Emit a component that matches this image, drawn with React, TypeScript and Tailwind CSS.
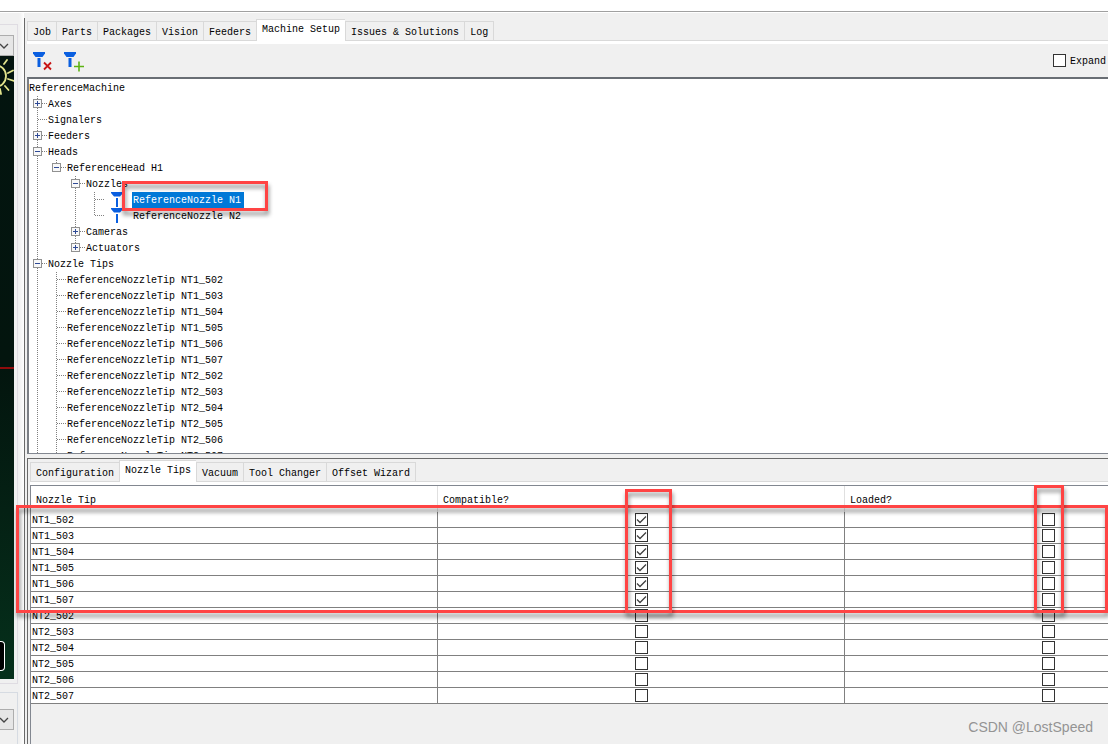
import { useState } from "react";
import clsx from "clsx";

type Cell = "blank" | "line" | "tee" | "end";

interface TreeRow {
  label: string;
  gutter: Cell[];
  toggle?: "plus" | "minus";
  nozzle?: boolean;
}

const tipNames = ["NT1_502", "NT1_503", "NT1_504", "NT1_505", "NT1_506", "NT1_507", "NT2_502", "NT2_503", "NT2_504", "NT2_505", "NT2_506", "NT2_507"];

const treeRows: TreeRow[] = [
  { label: "ReferenceMachine", gutter: [] },
  { label: "Axes", gutter: ["tee"], toggle: "plus" },
  { label: "Signalers", gutter: ["tee"] },
  { label: "Feeders", gutter: ["tee"], toggle: "plus" },
  { label: "Heads", gutter: ["tee"], toggle: "minus" },
  { label: "ReferenceHead H1", gutter: ["line", "end"], toggle: "minus" },
  { label: "Nozzles", gutter: ["line", "blank", "tee"], toggle: "minus" },
  { label: "ReferenceNozzle N1", gutter: ["line", "blank", "line", "tee"], nozzle: true },
  { label: "ReferenceNozzle N2", gutter: ["line", "blank", "line", "end"], nozzle: true },
  { label: "Cameras", gutter: ["line", "blank", "tee"], toggle: "plus" },
  { label: "Actuators", gutter: ["line", "blank", "end"], toggle: "plus" },
  { label: "Nozzle Tips", gutter: ["tee"], toggle: "minus" },
  ...tipNames.map((name): TreeRow => ({ label: `ReferenceNozzleTip ${name}`, gutter: ["line", "tee"] })),
];

const mainTabs = ["Job", "Parts", "Packages", "Vision", "Feeders", "Machine Setup", "Issues & Solutions", "Log"];
const detailTabs = ["Configuration", "Nozzle Tips", "Vacuum", "Tool Changer", "Offset Wizard"];

const TabStrip = ({ tabs, initial }: { tabs: string[]; initial: string }) => {
  const [active, setActive] = useState(initial);
  return (
    <div className="bg-[#f0f0f0]">
      <div className="flex items-end pt-px" role="tablist">
        {tabs.map((tab) => (
          <button
            key={tab}
            role="tab"
            aria-selected={tab === active}
            onClick={() => setActive(tab)}
            className={clsx(
              "shrink-0 whitespace-nowrap border-l border-t border-[#d9d9d9] px-[5px] leading-4 last-of-type:border-r",
              tab === active ? "h-[22px] bg-white pb-0.5" : "h-5 border-b pt-[3px]"
            )}
          >
            {tab}
          </button>
        ))}
        <div className="h-5 flex-1 border-b border-[#d9d9d9]" />
      </div>
      <div className="h-[3px] bg-white" />
    </div>
  );
};

const NozzleIcon = () => (
  <svg width="12" height="16" viewBox="0 0 12 16" className="shrink-0" aria-hidden="true">
    <path d="M0 0h12v1L9 4.5H3L0 1z" fill="#0a5fe0" />
    <path d="M5 6h2v9H5z" fill="#0a5fe0" />
  </svg>
);

const ToolbarIcon = ({ kind }: { kind: "remove" | "add" }) => (
  <svg width="20" height="20" viewBox="0 0 20 20" aria-hidden="true">
    <path d="M0 0h12v1.500L9.500 5h-7L0 1.500z" fill="#0a5fe0" />
    <path d="M4.500 6h3v9h-3z" fill="#0a5fe0" />
    {kind === "remove" ? (
      <path d="M11 10.500l7 7M18 10.500l-7 7" stroke="#c81414" strokeWidth="1.800" />
    ) : (
      <path d="M10 14.500h10M15 9.500v10" stroke="#5cb212" strokeWidth="1.600" />
    )}
  </svg>
);

const Gutter = ({ cell, toggle }: { cell: Cell; toggle?: "plus" | "minus" }) => (
  <svg width="19" height="16" viewBox="0 0 19 16" className="shrink-0" aria-hidden="true">
    <g stroke="#808080" strokeDasharray="1 1" shapeRendering="crispEdges">
      {(cell === "line" || cell === "tee") && <path d="M8.500 0v16" />}
      {cell === "end" && <path d="M8.500 0v8" />}
      {(cell === "tee" || cell === "end") && <path d="M9 7.500h9" />}
    </g>
    {toggle && (
      <g shapeRendering="crispEdges">
        <rect x="4.500" y="3.500" width="8" height="8" fill="#f8f8f8" stroke="#919191" />
        <path d="M6 7.500h5" stroke="#2f4a96" />
        {toggle === "plus" && <path d="M8.500 5v5" stroke="#2f4a96" />}
      </g>
    )}
  </svg>
);

const CheckBox = ({ id, label, checked }: { id?: string; label?: string; checked?: boolean }) => (
  <span className="grid size-[13px] shrink-0">
    <input
      id={id}
      type="checkbox"
      aria-label={label}
      defaultChecked={checked}
      className="peer col-start-1 row-start-1 size-[13px] appearance-none border border-[#333333] bg-white"
    />
    <svg viewBox="0 0 13 13" className="pointer-events-none invisible col-start-1 row-start-1 size-[13px] peer-checked:visible" aria-hidden="true">
      <path d="M2 6.500l3 3L11 3.500" fill="none" stroke="#404040" strokeWidth="1.300" />
    </svg>
  </span>
);

const ComboArrow = ({ label }: { label: string }) => (
  <button aria-label={label} className="flex h-[21px] w-3.5 shrink-0 items-center border border-l-0 border-[#adadad] bg-[#e6e6e6]">
    <svg width="9" height="6" viewBox="0 0 9 6" fill="none" stroke="#444444" strokeWidth="1.300" aria-hidden="true">
      <path d="M0 1l4 4 4-4" />
    </svg>
  </button>
);

const CameraPanel = () => (
  <aside className="flex w-6 shrink-0 flex-col bg-gradient-to-r from-[#f0f0f0] from-80% to-white">
    <div className="mr-1.5 mt-[11px] flex min-h-0 flex-1 flex-col border-r border-y border-[#dfdce2] pb-1 pt-2.5">
      <ComboArrow label="Select camera" />
      <div className="flex w-3.5 flex-1 flex-col bg-gradient-to-b from-[#03140f] via-[#03150e] to-[#05301b]">
        <div className="min-h-0 flex-1">
          <svg width="14" height="42" viewBox="0 0 14 42" fill="none" stroke="#e2e48c" strokeWidth="1.800" strokeLinecap="round" aria-hidden="true">
            <circle cx="-5" cy="20" r="11" />
            <path d="M4 8l3-4M8 17l5-2.500M8 23l6 2M5 30l3.500 4M0 33l1 5" />
          </svg>
        </div>
        <div className="h-0.5 shrink-0 bg-[#8f0c0c]" />
        <div className="flex min-h-0 flex-1 items-end">
          <div className="mb-2 h-[30px] w-[5px] rounded-r-sm border border-l-0 border-white bg-black" />
        </div>
      </div>
    </div>
    <div className="mr-1.5 mt-2 border-r border-t border-[#d6dbe2] pb-3.5 pt-4">
      <ComboArrow label="Select control" />
    </div>
  </aside>
);

const MachineTree = () => {
  const [selected, setSelected] = useState("ReferenceNozzle N1");
  return (
    <div className="min-h-0 flex-1 overflow-hidden border-b border-l-2 border-t-2 border-b-[#828790] border-l-[#7b7f85] border-t-[#696e74] bg-white pt-px" role="tree">
      {treeRows.map((row) => (
        <div key={row.label} className="flex h-4 items-center" role="treeitem" aria-selected={row.label === selected}>
          {row.gutter.map((cell, i) => (
            <Gutter key={i} cell={cell} toggle={i === row.gutter.length - 1 ? row.toggle : undefined} />
          ))}
          {row.nozzle && (
            <span className="ml-1.5 mr-[9px]">
              <NozzleIcon />
            </span>
          )}
          <button
            onClick={() => setSelected(row.label)}
            className={clsx(
              "h-4 whitespace-nowrap pt-0.5 leading-[14px]",
              row.nozzle && "pl-px pr-[3px]",
              row.label === selected && "bg-[#0078d7] text-white"
            )}
          >
            {row.label}
          </button>
        </div>
      ))}
    </div>
  );
};

const NozzleTipTable = () => (
  <div className="overflow-hidden border-l border-t border-[#828790] pb-10">
    <table className="w-[1221px] table-fixed border-separate border-spacing-0 bg-white">
      <thead>
        <tr>
          {["Nozzle Tip", "Compatible?", "Loaded?"].map((title) => (
            <th key={title} className="h-[26px] border-r border-[#e0e0e0] p-0 pl-[5px] pt-1 text-left font-normal leading-4">
              {title}
            </th>
          ))}
        </tr>
      </thead>
      <tbody>
        {tipNames.map((name) => (
          <tr key={name}>
            <td className="border-b border-r border-[#808080] p-0 pl-px pt-0.5 leading-[13px]">{name}</td>
            <td className="border-b border-r border-[#808080] p-0">
              <div className="flex h-[15px] items-center justify-center">
                <CheckBox label={`${name} compatible`} checked={name.startsWith("NT1")} />
              </div>
            </td>
            <td className="border-b border-r border-[#808080] p-0">
              <div className="flex h-[15px] items-center justify-center">
                <CheckBox label={`${name} loaded`} />
              </div>
            </td>
          </tr>
        ))}
      </tbody>
    </table>
  </div>
);

// Red highlight frames drawn over the window
const marks = [
  "left-[122px] top-[181px] h-[30px] w-[146px]",
  "left-4 right-0 top-[505px] h-[108px]",
  "left-[625px] top-[489px] h-[124px] w-[47px]",
  "left-[1034px] top-[485px] h-[128px] w-[30px]",
];

export default function App() {
  return (
    <div className="relative flex h-screen flex-col overflow-hidden bg-[#f0f0f0] font-['Liberation_Mono',monospace] text-[10px] text-black">
      <div className="h-3 shrink-0 border-b border-[#a0a0a0] bg-white" />
      <div className="h-px shrink-0 bg-white" />

      <div className="flex min-h-0 flex-1">
        <CameraPanel />

        <main className="mt-[5px] flex min-w-0 flex-1 flex-col border-l border-[#696969] pl-0.5">
          <TabStrip tabs={mainTabs} initial="Machine Setup" />

          <div className="flex h-[33px] shrink-0 items-center justify-between pl-1.5 pr-0.5">
            <div className="flex gap-[11px] pt-0.5">
              <button aria-label="Remove nozzle">
                <ToolbarIcon kind="remove" />
              </button>
              <button aria-label="Add nozzle">
                <ToolbarIcon kind="add" />
              </button>
            </div>
            <div className="flex items-center gap-1">
              <CheckBox id="expand" />
              <label htmlFor="expand" className="pt-0.5">
                Expand
              </label>
            </div>
          </div>

          <MachineTree />

          <section className="mt-1 shrink-0 border-l border-t border-[#696969] pl-0.5">
            <TabStrip tabs={detailTabs} initial="Nozzle Tips" />
            <NozzleTipTable />
          </section>
        </main>
      </div>

      {marks.map((mark) => (
        <div key={mark} className={clsx("pointer-events-none absolute border-3 border-[#ff4444] drop-shadow-[1px_4px_2px_rgba(0,0,0,0.45)]", mark)} />
      ))}

      <p className="absolute bottom-[7px] right-[15px] font-['Liberation_Sans',sans-serif] text-sm text-[#949494]">CSDN @LostSpeed</p>
    </div>
  );
}
